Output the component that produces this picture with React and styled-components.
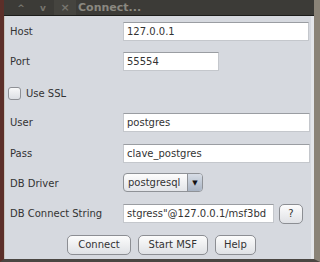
import React from "react";
import styled, { createGlobalStyle } from "styled-components";

const Global = createGlobalStyle`
  html, body {
    margin: 0;
    padding: 0;
    background: #3c3b37;
  }
  body {
    font-family: "DejaVu Sans", Verdana, sans-serif;
    font-size: 10px;
    color: #333;
  }
`;

const Frame = styled.div`
  width: 320px;
  height: 262px;
  box-sizing: border-box;
  display: flex;
  flex-direction: column;
  border-left: 4px solid #5c2f29;
  border-right: 6px solid #8a8377;
  border-bottom: 3px solid #4a4642;
  background: #d6d9df;
  overflow: hidden;
`;

const TitleBar = styled.div`
  height: 15px;
  flex: 0 0 15px;
  background: #3c3b37;
  border-bottom: 1px solid #1c1c1a;
  display: flex;
  align-items: center;
  padding-left: 6px;
  color: #8a8880;
`;

const TitleButton = styled.div`
  width: 22px;
  height: 15px;
  display: flex;
  align-items: center;
  justify-content: center;
  color: #77756e;
  font-size: ${(p) => (p.small ? "9px" : "11px")};
  font-weight: bold;
  background: ${(p) => (p.active ? "#45443f" : "transparent")};
`;

const Title = styled.div`
  margin-left: 2px;
  font-size: 11px;
  font-weight: bold;
  color: #8a8880;
`;

const Body = styled.div`
  flex: 1;
  border-left: 1px solid #c8c4bc;
  border-right: 3px solid #e4e6ea;
  padding: 6px 0 0 5px;
`;

const Form = styled.div`
  display: grid;
  grid-template-columns: 113px 1fr;
  grid-auto-rows: 19px;
  row-gap: 11.4px;
`;

const Label = styled.div`
  display: flex;
  align-items: center;
  color: #333;
`;

const Input = styled.div`
  box-sizing: border-box;
  height: 19px;
  width: ${(p) => p.w}px;
  background: #fff;
  border: 1px solid #c4c7cc;
  border-top-color: #9a9da2;
  padding: 0 3px;
  display: flex;
  align-items: center;
  color: #333;
  white-space: nowrap;
  overflow: hidden;
`;

const Field = styled.div`
  display: flex;
  align-items: center;
  gap: 5px;
`;

const CheckRow = styled.div`
  grid-column: 1 / span 2;
  display: flex;
  align-items: center;
  gap: 5px;
  margin-left: -2px;
  padding-top: 3px;
`;

const Box = styled.div`
  width: 11px;
  height: 11px;
  border: 1px solid #8e9095;
  border-radius: 3px;
  background: linear-gradient(#f8f8f9, #dcdfe4);
`;

const Select = styled.div`
  box-sizing: border-box;
  width: 80px;
  height: 19px;
  margin-top: -1px;
  border: 1px solid #8f9297;
  border-radius: 4px;
  display: flex;
  overflow: hidden;
  background: linear-gradient(#fdfdfd, #e3e5e9);
`;

const SelectText = styled.div`
  flex: 1;
  display: flex;
  align-items: center;
  padding-left: 4px;
  color: #333;
  font-size: 10px;
`;

const SelectArrow = styled.div`
  width: 14px;
  border-left: 1px solid #8f9297;
  background: linear-gradient(#d7dde6, #a9b4c4);
  display: flex;
  align-items: center;
  justify-content: center;
  color: #111;
  font-size: 7px;
`;

const Button = styled.button`
  box-sizing: border-box;
  height: 20px;
  width: ${(p) => (p.w ? `${p.w}px` : "auto")};
  padding: 0 ${(p) => (p.w ? 0 : p.narrow ? 8 : 10)}px;
  font-family: inherit;
  font-size: 10px;
  color: #333;
  border: 1px solid #8c8e93;
  border-radius: 5px;
  background: linear-gradient(#fcfcfc, #dfe1e5);
`;

const ButtonRow = styled.div`
  grid-column: 1 / span 2;
  display: flex;
  justify-content: center;
  gap: 7px;
  margin-left: 2px;
`;

export default function App() {
  return (
    <>
      <Global />
      <Frame>
        <TitleBar>
          <TitleButton small>^</TitleButton>
          <TitleButton small>v</TitleButton>
          <TitleButton active>×</TitleButton>
          <Title>Connect...</Title>
        </TitleBar>
        <Body>
          <Form>
            <Label>Host</Label>
            <Field>
              <Input w={186}>127.0.0.1</Input>
            </Field>
            <Label>Port</Label>
            <Field>
              <Input w={96}>55554</Input>
            </Field>
            <CheckRow>
              <Box />
              <span>Use SSL</span>
            </CheckRow>
            <Label>User</Label>
            <Field>
              <Input w={187}>postgres</Input>
            </Field>
            <Label>Pass</Label>
            <Field>
              <Input w={187}>clave_postgres</Input>
            </Field>
            <Label>DB Driver</Label>
            <Field>
              <Select>
                <SelectText>postgresql</SelectText>
                <SelectArrow>▼</SelectArrow>
              </Select>
            </Field>
            <Label>DB Connect String</Label>
            <Field>
              <Input w={151}>stgress"@127.0.0.1/msf3bd</Input>
              <Button w={24}>?</Button>
            </Field>
            <ButtonRow>
              <Button>Connect</Button>
              <Button>Start MSF</Button>
              <Button narrow>Help</Button>
            </ButtonRow>
          </Form>
        </Body>
      </Frame>
    </>
  );
}
